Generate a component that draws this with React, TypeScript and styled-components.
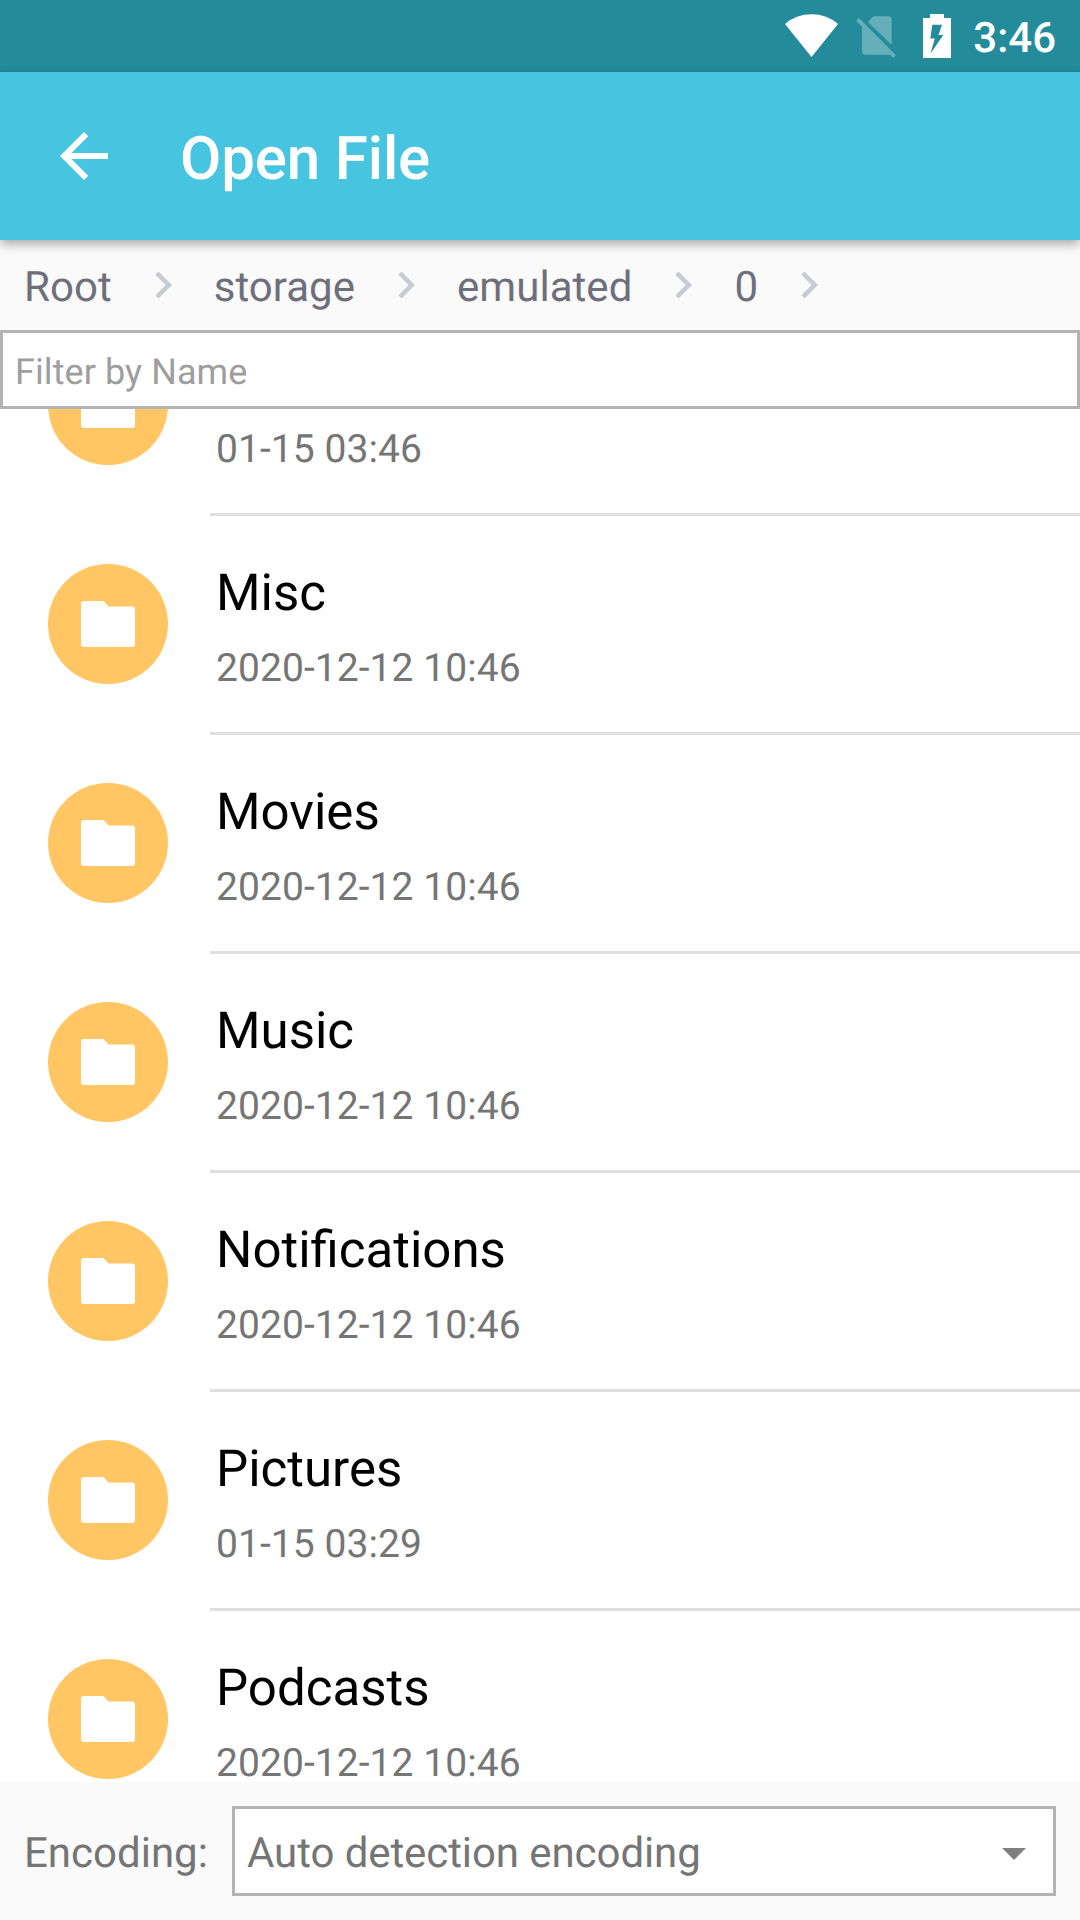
import React from "react";
import styled, { createGlobalStyle } from "styled-components";

const GlobalStyle = createGlobalStyle`
  *, *::before, *::after { box-sizing: border-box; }
  body {
    margin: 0;
    background: #ffffff;
    font-family: Roboto, "Noto Sans", sans-serif;
    text-rendering: geometricPrecision;
  }
`;

const Screen = styled.div`
  display: flex;
  flex-direction: column;
  width: 1080px;
  height: 1920px;
  overflow: hidden;
  background: #fafafa;
`;

const StatusBar = styled.header`
  display: flex;
  align-items: flex-start;
  justify-content: flex-end;
  flex: 0 0 72px;
  min-height: 0;
  height: 72px;
  padding-right: 24px;
  background: #248b9b;
  color: #ffffff;
`;

const StatusIcon = styled.svg<{ $gap: number }>`
  display: block;
  height: 72px;
  margin-right: ${(p) => p.$gap}px;
`;

const Clock = styled.span`
  height: 72px;
  font-size: 42px;
  font-weight: 500;
  line-height: 77px;
`;

const AppBar = styled.div`
  position: relative;
  z-index: 1;
  display: flex;
  align-items: center;
  flex: 0 0 168px;
  padding-left: 48px;
  gap: 60px;
  background: #47c4df;
  color: #ffffff;
  box-shadow: 0 4px 10px rgba(0, 0, 0, 0.33);
`;

const BackButton = styled.button`
  display: flex;
  padding: 0;
  border: 0;
  background: none;
  color: inherit;
`;

const Title = styled.h1`
  margin: 0;
  padding-top: 5px;
  font-size: 60px;
  font-weight: 500;
  line-height: 70px;
  letter-spacing: -0.13px;
`;

const Breadcrumbs = styled.nav`
  display: flex;
  align-items: center;
  flex: 0 0 90px;
`;

const Crumb = styled.span`
  padding: 6px 24px 0;
  font-size: 42px;
  line-height: 50px;
  letter-spacing: 0.04px;
  color: #6f6f7b;
`;

const FilterInput = styled.input`
  flex: 0 0 79px;
  width: 100%;
  padding: 4px 12px 0;
  border: 3px solid #b3b3b3;
  border-radius: 0;
  outline: 0;
  background: #ffffff;
  font: 36px Roboto, "Noto Sans", sans-serif;
  text-rendering: inherit;
  letter-spacing: 0.08px;
  color: #000000;
  &::placeholder { color: #9e9e9e; opacity: 1; }
`;

const FileList = styled.ul`
  display: flex;
  flex-direction: column;
  flex: 1 1 0;
  min-height: 0;
  margin: 0;
  padding: 0;
  overflow: hidden;
  list-style: none;
  background: #ffffff;
`;

const FileRow = styled.li<{ $scrolled?: boolean }>`
  display: flex;
  flex: 0 0 219px;
  padding-left: 48px;
  margin-top: ${(p) => (p.$scrolled ? "-112px" : "0")};
`;

const FolderBadge = styled.div`
  flex: 0 0 120px;
  height: 120px;
  margin: 48px 42px 0 0;
  border-radius: 50%;
  background: #ffc663;
`;

const FileInfo = styled.div`
  flex: 1;
  display: flex;
  flex-direction: column;
  padding: 48px 0 0 6px;
  border-bottom: 3px solid #dfdfdf;
`;

const FileName = styled.span`
  height: 60px;
  font-size: 51px;
  line-height: 60px;
  color: #000000;
`;

const FileDate = styled.span`
  margin-top: 24px;
  font-size: 39px;
  line-height: 40px;
  letter-spacing: 0.06px;
  color: #757575;
`;

const Footer = styled.footer`
  display: flex;
  align-items: center;
  flex: 0 0 138px;
  padding: 0 24px;
  background: #fafafa;
  font-size: 42px;
  line-height: 50px;
  color: #757575;
`;

const EncodingLabel = styled.label`
  flex: 0 0 208px;
  padding-top: 5px;
`;

const EncodingSelect = styled.div`
  display: flex;
  align-items: center;
  justify-content: space-between;
  flex: 1;
  height: 90px;
  padding: 5px 27px 0 12px;
  border: 3px solid #b3b3b3;
  background: #ffffff;
  letter-spacing: -0.08px;
`;

const files = [
  { name: "", date: "01-15 03:46" },
  { name: "Misc", date: "2020-12-12 10:46" },
  { name: "Movies", date: "2020-12-12 10:46" },
  { name: "Music", date: "2020-12-12 10:46" },
  { name: "Notifications", date: "2020-12-12 10:46" },
  { name: "Pictures", date: "01-15 03:29" },
  { name: "Podcasts", date: "2020-12-12 10:46" },
];

const Chevron = () => (
  <svg width="54" height="54" viewBox="0 0 24 24" fill="#c9cbd3">
    <path d="M10 6L8.59 7.41 13.17 12l-4.58 4.59L10 18l6-6z" />
  </svg>
);

const FolderIcon = () => (
  <svg width="120" height="120" viewBox="0 0 120 120" fill="#ffffff">
    <path d="M36 37h19.500l5 5.500H84q3 0 3 3V80q0 3-3 3H36q-3 0-3-3V40q0-3 3-3z" />
  </svg>
);

export default function App() {
  return (
    <>
      <GlobalStyle />
      <Screen>
        <StatusBar>
          <StatusIcon $gap={18} width="54" viewBox="0 0 54 72" fill="#ffffff">
            <path d="M27.500 57L1 24Q12 14.300 27.500 14.300T54 24z" />
          </StatusIcon>
          <StatusIcon $gap={27} width="40" viewBox="0 0 40 72" fill="#ffffff" fillOpacity="0.3">
            <path d="M12 22L16.500 17Q17.200 16.300 18.500 16.300H32.500Q35.700 16.300 35.700 19.500V45z" />
            <path d="M3 18L0.300 21 6 26.500V51Q6 54.700 9.500 54.700H34L37.300 58 40 55.300z" />
          </StatusIcon>
          <StatusIcon $gap={22} width="28" viewBox="0 0 28 72" fill="#ffffff">
            <path fillRule="evenodd" d="M7 14h14v4h7v40H0V18h7zM9.300 24.700L7.300 38.500h4.500L7.500 53.500 20.300 35H15.500L19 24.700z" />
          </StatusIcon>
          <Clock>3:46</Clock>
        </StatusBar>
        <AppBar>
          <BackButton aria-label="Back">
            <svg width="72" height="72" viewBox="0 0 24 24" fill="currentColor">
              <path d="M20 11H7.830l5.590-5.590L12 4l-8 8 8 8 1.410-1.410L7.830 13H20z" />
            </svg>
          </BackButton>
          <Title>Open File</Title>
        </AppBar>
        <Breadcrumbs>
          {["Root", "storage", "emulated", "0"].map((part) => (
            <React.Fragment key={part}>
              <Crumb>{part}</Crumb>
              <Chevron />
            </React.Fragment>
          ))}
        </Breadcrumbs>
        <FilterInput placeholder="Filter by Name" />
        <FileList>
          {files.map((file, index) => (
            <FileRow key={index} $scrolled={index === 0}>
              <FolderBadge>
                <FolderIcon />
              </FolderBadge>
              <FileInfo>
                <FileName>{file.name}</FileName>
                <FileDate>{file.date}</FileDate>
              </FileInfo>
            </FileRow>
          ))}
        </FileList>
        <Footer>
          <EncodingLabel>Encoding:</EncodingLabel>
          <EncodingSelect>
            <span>Auto detection encoding</span>
            <svg width="24" height="12" viewBox="0 0 24 12" fill="#808080">
              <path d="M0 0h24L12 12z" />
            </svg>
          </EncodingSelect>
        </Footer>
      </Screen>
    </>
  );
}
